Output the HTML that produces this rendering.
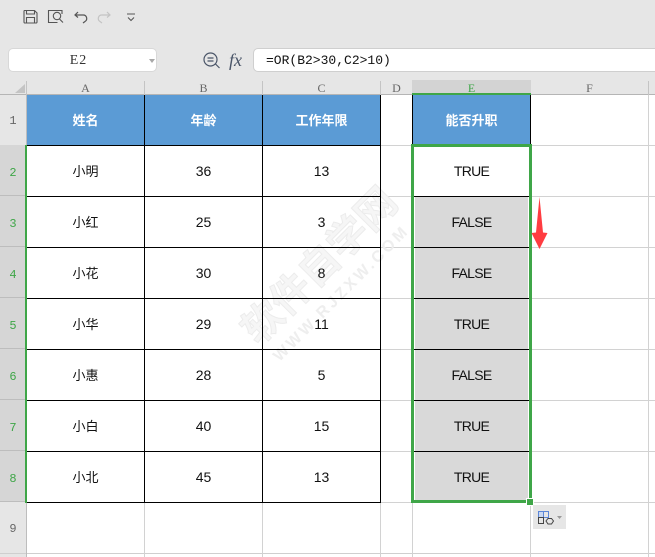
<!DOCTYPE html>
<html><head><meta charset="utf-8"><style>
html,body{margin:0;padding:0;width:655px;height:557px;overflow:hidden;background:#fff}
body{position:relative;font-family:"Liberation Sans","Noto Sans CJK SC",sans-serif;color:#111}
div{position:absolute;box-sizing:border-box}
.h{height:1px}.v{width:1px}
.g{background:#d2d2d2}.k{background:#000}
.c{text-align:center;font-size:14px;height:50px;line-height:50px;width:117px}
.a{left:27px}.b{left:145px}.d{left:263px}.e{left:413px}
.e.c{letter-spacing:-.7px}
.n{font-size:13px;line-height:51px}
.w{color:#fff;font-weight:bold;font-size:13px;line-height:51px;letter-spacing:0 !important}
.ch{font:12px/14px "Liberation Serif",serif;color:#666;top:81px;text-align:center}
.rh{font:12px/20px "Liberation Mono",monospace;left:0;width:26px;text-align:center;color:#3fa648}
.rb{left:0;width:26px;height:51px;background:#d6d6d6;border-bottom:1px solid #bdbdbd}
</style></head><body>
<div style="left:0;top:0;width:655px;height:95px;background:#e6e6e6"></div>
<svg style="position:absolute;left:0;top:0" width="150" height="32" fill="none" stroke="#555" stroke-width="1.100">
<path d="M24.500 10.500h10l2.500 2.500v9a1 1 0 0 1-1 1h-11a1 1 0 0 1-1-1v-11a1 1 0 0 1 .5-.5zM26.500 10.500v3.500h8v-3.500M26.500 22.500v-5h8v5"/>
<path d="M62 14v-3.500h-13.500v12h9"/><circle cx="57" cy="16" r="3.700"/><path d="M59.500 19l3.500 3.500"/>
<path d="M78 12l-3 3 3 2.500M75 15h8a3.500 3.500 0 0 1 2 6.500l-2 1.500" stroke-width="1.200"/>
<path d="M107 12l3 3-3 2.500M110 15h-8a3.500 3.500 0 0 0-2 6.500l2 1.500" stroke="#c4c4c4" stroke-width="1.200"/>
<path d="M127 14h8M128 17.500l3 3 3-3" stroke-width="1.100"/>
</svg>
<div style="left:8px;top:48px;width:149px;height:24px;background:#fff;border:1px solid #d8d8d8;border-radius:5px;font:14px/23px 'Liberation Serif',serif;letter-spacing:1px;text-align:center;color:#333;padding-right:8px">E2</div>
<div style="left:149px;top:59px;border:3px solid transparent;border-top:4px solid #a8a8a8"></div>
<svg style="position:absolute;left:200px;top:50px" width="50" height="22" fill="none" stroke="#4a5568" stroke-width="1.200">
<circle cx="10.500" cy="9.500" r="6.500"/><path d="M15.500 14l4 4M7.500 8h6M7.500 11h6"/>
</svg>
<div style="left:229px;top:50px;font:italic 18px/21px 'Liberation Serif',serif;color:#4a5568">fx</div>
<div style="left:253px;top:48px;width:410px;height:24px;background:#fff;border:1px solid #cfcfcf;border-radius:5px;font:13px/23px 'Liberation Mono',monospace;padding-left:12px;color:#111">=OR(B2&gt;30,C2&gt;10)</div>

<!-- column header -->
<div style="left:0;top:94px;width:655px;height:1px;background:#b5b5b5"></div>
<svg style="position:absolute;left:14px;top:82px" width="12" height="12"><path d="M1 11L11 2v9z" fill="#c4c4c4"/></svg>
<div style="left:412px;top:80px;width:119px;height:14px;background:#d3d3d3"></div>
<div class="v" style="left:26px;top:81px;height:14px;background:#c4c4c4"></div>
<div class="v" style="left:144px;top:81px;height:14px;background:#c4c4c4"></div>
<div class="v" style="left:262px;top:81px;height:14px;background:#c4c4c4"></div>
<div class="v" style="left:380px;top:81px;height:14px;background:#c4c4c4"></div>
<div class="v" style="left:648px;top:81px;height:14px;background:#c4c4c4"></div>
<div class="ch" style="left:27px;width:117px">A</div>
<div class="ch" style="left:145px;width:117px">B</div>
<div class="ch" style="left:263px;width:117px">C</div>
<div class="ch" style="left:381px;width:31px">D</div>
<div class="ch" style="left:413px;width:117px;color:#3fa648">E</div>
<div class="ch" style="left:531px;width:117px">F</div>
<div style="left:412px;top:93px;width:119px;height:2px;background:#3fa648"></div>

<!-- row header -->
<div style="left:0;top:95px;width:26px;height:462px;background:#e6e6e6"></div>
<div class="rb" style="top:145px"></div><div class="rb" style="top:196px"></div><div class="rb" style="top:247px"></div><div class="rb" style="top:298px"></div><div class="rb" style="top:349px"></div><div class="rb" style="top:400px"></div><div class="rb" style="top:451px"></div>
<div class="h" style="left:0;top:553px;width:655px;background:#cfcfcf"></div>
<div class="v" style="left:26px;top:95px;height:462px;background:#bdbdbd"></div>
<div class="rh" style="top:111px;color:#666">1</div>
<div class="rh" style="top:163px">2</div><div class="rh" style="top:214px">3</div><div class="rh" style="top:265px">4</div><div class="rh" style="top:316px">5</div><div class="rh" style="top:367px">6</div><div class="rh" style="top:418px">7</div><div class="rh" style="top:469px">8</div>
<div class="rh" style="top:519px;color:#666">9</div>

<!-- gridlines -->
<div class="h g" style="left:381px;top:145px;width:274px"></div>
<div class="h g" style="left:381px;top:196px;width:274px"></div>
<div class="h g" style="left:381px;top:247px;width:274px"></div>
<div class="h g" style="left:381px;top:298px;width:274px"></div>
<div class="h g" style="left:381px;top:349px;width:274px"></div>
<div class="h g" style="left:381px;top:400px;width:274px"></div>
<div class="h g" style="left:381px;top:451px;width:274px"></div>
<div class="h g" style="left:381px;top:502px;width:274px"></div>
<div class="v g" style="left:648px;top:95px;height:462px"></div>
<div class="v g" style="left:144px;top:503px;height:54px"></div>
<div class="v g" style="left:262px;top:503px;height:54px"></div>
<div class="v g" style="left:380px;top:503px;height:54px"></div>
<div class="v g" style="left:412px;top:503px;height:54px"></div>
<div class="v g" style="left:530px;top:503px;height:54px"></div>

<!-- blue headers and E fill -->
<div style="left:27px;top:95px;width:354px;height:50px;background:#5b9bd5"></div>
<div style="left:412px;top:95px;width:119px;height:50px;background:#5b9bd5"></div>
<div style="left:415px;top:197px;width:113px;height:303px;background:#d9d9d9"></div>

<!-- watermark -->
<div style="left:210px;top:242px;width:220px;height:48px;line-height:48px;text-align:center;font-size:40px;font-weight:bold;color:#f6f6f6;-webkit-text-stroke:1px #ececec;transform:rotate(-45deg);white-space:nowrap">软件自学网</div>
<div style="left:232px;top:284px;width:220px;height:20px;line-height:20px;text-align:center;font-size:16px;font-weight:bold;letter-spacing:3px;color:#eeeeee;transform:rotate(-45deg);white-space:nowrap">WWW.RJZXW.COM</div>

<!-- black lines -->
<div class="h k" style="left:26px;top:145px;width:355px"></div>
<div class="h k" style="left:26px;top:196px;width:355px"></div>
<div class="h k" style="left:26px;top:247px;width:355px"></div>
<div class="h k" style="left:26px;top:298px;width:355px"></div>
<div class="h k" style="left:26px;top:349px;width:355px"></div>
<div class="h k" style="left:26px;top:400px;width:355px"></div>
<div class="h k" style="left:26px;top:451px;width:355px"></div>
<div class="h k" style="left:26px;top:502px;width:355px"></div>
<div class="v k" style="left:144px;top:95px;height:408px"></div>
<div class="v k" style="left:262px;top:95px;height:408px"></div>
<div class="v k" style="left:380px;top:95px;height:408px"></div>
<div class="v k" style="left:412px;top:95px;height:50px"></div>
<div class="v k" style="left:530px;top:95px;height:50px"></div>
<div class="h k" style="left:412px;top:196px;width:119px"></div>
<div class="h k" style="left:412px;top:247px;width:119px"></div>
<div class="h k" style="left:412px;top:298px;width:119px"></div>
<div class="h k" style="left:412px;top:349px;width:119px"></div>
<div class="h k" style="left:412px;top:400px;width:119px"></div>
<div class="h k" style="left:412px;top:451px;width:119px"></div>

<!-- headers text -->
<div class="c w a" style="top:95px">姓名</div><div class="c w b" style="top:95px">年龄</div><div class="c w d" style="top:95px">工作年限</div><div class="c w e" style="top:95px">能否升职</div>

<!-- rows -->
<div class="c n a" style="top:146px">小明</div><div class="c b" style="top:146px">36</div><div class="c d" style="top:146px">13</div><div class="c e" style="top:146px">TRUE</div>
<div class="c n a" style="top:197px">小红</div><div class="c b" style="top:197px">25</div><div class="c d" style="top:197px">3</div><div class="c e" style="top:197px">FALSE</div>
<div class="c n a" style="top:248px">小花</div><div class="c b" style="top:248px">30</div><div class="c d" style="top:248px">8</div><div class="c e" style="top:248px">FALSE</div>
<div class="c n a" style="top:299px">小华</div><div class="c b" style="top:299px">29</div><div class="c d" style="top:299px">11</div><div class="c e" style="top:299px">TRUE</div>
<div class="c n a" style="top:350px">小惠</div><div class="c b" style="top:350px">28</div><div class="c d" style="top:350px">5</div><div class="c e" style="top:350px">FALSE</div>
<div class="c n a" style="top:401px">小白</div><div class="c b" style="top:401px">40</div><div class="c d" style="top:401px">15</div><div class="c e" style="top:401px">TRUE</div>
<div class="c n a" style="top:452px">小北</div><div class="c b" style="top:452px">45</div><div class="c d" style="top:452px">13</div><div class="c e" style="top:452px">TRUE</div>

<!-- selection -->
<div style="left:411px;top:144px;width:121px;height:359px;border:3px solid #3fa648"></div>
<div style="left:25px;top:145px;width:2px;height:358px;background:#3fa648"></div>
<div style="left:527px;top:499px;width:6px;height:6px;background:#3fa648;border:1px solid #fff;box-sizing:content-box;margin:-1px"></div>

<!-- arrow -->
<svg style="position:absolute;left:528px;top:195px" width="22" height="56"><path d="M11.500 2L15 37.500l4.500 .5L11.500 54 3.500 38l4.500-.5z" fill="#ff3c41"/></svg>

<!-- paste options -->
<div style="left:533px;top:505px;width:33px;height:24px;background:#e6e6e6"></div>
<svg style="position:absolute;left:533px;top:505px" width="33" height="24" fill="none" stroke="#444" stroke-width="1">
<path d="M5.500 6.500h5v6h-5z" stroke="#5b86d8" fill="#c9d8f2"/><path d="M10.500 6.500h5v6h-5z" stroke="#5b86d8"/>
<path d="M5.500 12.500h5v6h-5zM10.500 12.500v6"/>
<path d="M15 13.500h3.500l2 2.500-2 3H15l-2-3z" fill="#e6e6e6"/>
<path d="M24 11h5l-2.500 3z" fill="#999" stroke="none"/>
</svg>
</body></html>
